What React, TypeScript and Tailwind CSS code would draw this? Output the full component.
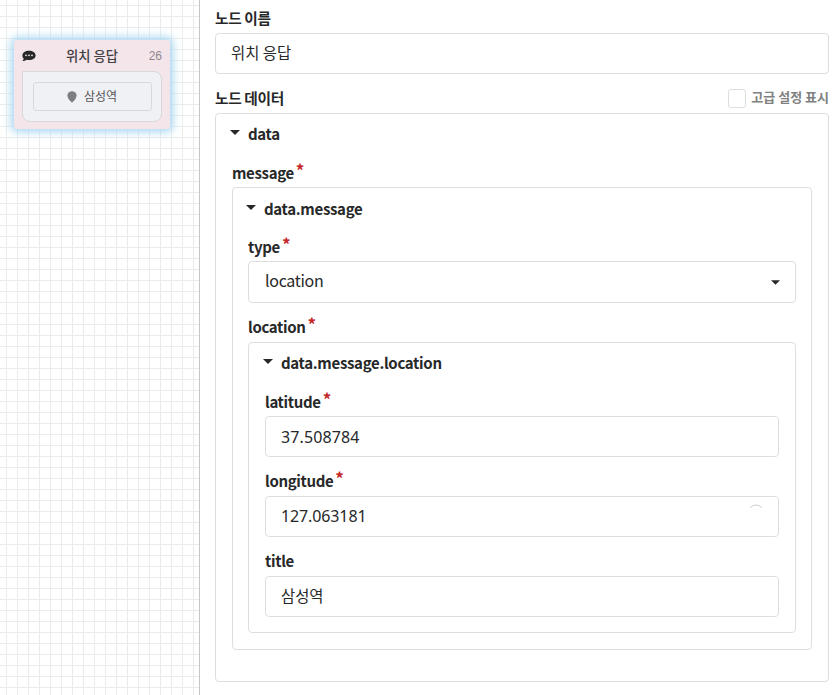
import type { ReactNode } from "react";

const korean = "font-['Noto_Sans_CJK_KR',sans-serif]";
const box = "rounded-[4px] border border-[#dededf] bg-white";

function Caret({ className = "" }: { className?: string }) {
  return (
    <svg viewBox="0 0 10 5" className={`h-[5px] w-[10px] shrink-0 fill-[#272829] ${className}`}>
      <path d="M0 0h10L5 5z" />
    </svg>
  );
}

function Label({ children, required = false, className = "" }: { children: ReactNode; required?: boolean; className?: string }) {
  return (
    <div className={`flex items-start text-[15px] leading-[20px] font-bold ${className}`}>
      <span className="tracking-[-0.35px]">{children}</span>
      {required && <span className="ml-[2px] -mt-[3px] text-[17px] font-bold text-[#c5282a]">*</span>}
    </div>
  );
}

function Heading({ children }: { children: ReactNode }) {
  return (
    <div className="flex h-[20px] items-start text-[15px] leading-[20px] font-bold">
      <Caret className="mt-[6px] mr-[8px]" />
      <span className="tracking-[-0.32px]">{children}</span>
    </div>
  );
}

function Field({ children, className = "" }: { children: ReactNode; className?: string }) {
  return <div className={`flex h-[41px] items-center px-[15px] text-[16px] ${box} ${className}`}>{children}</div>;
}

function FlowNode() {
  return (
    <div className="mt-[40px] ml-[14px] h-[89px] w-[156px] rounded-[3px] bg-[#f4e5ea] px-[8px] shadow-[0_0_8px_3px_#a9d8f2]">
      <div className="flex h-[31px] items-center">
        <svg viewBox="0 0 14 12" className="mt-px h-[12px] w-[14px]">
          <path fill="#272829" d="M7 .7c3.8 0 6.6 2 6.6 4.7S10.8 10 7 10c-.8 0-1.600-.1-2.300-.3C3.500 10.600 2 11 .5 10.900c.6-.7 1.100-1.500 1.200-2.300C.9 7.700.4 6.600.4 5.400.4 2.700 3.200.7 7 .7z" />
          <g fill="#f4e5ea">
            <circle cx="4" cy="5.300" r=".9" />
            <circle cx="7" cy="5.300" r=".9" />
            <circle cx="10" cy="5.300" r=".9" />
          </g>
        </svg>
        <span className="ml-[30px] text-[13.300px] leading-[20px] font-medium whitespace-nowrap text-[#414043]">위치 응답</span>
        <span className="ml-auto font-['Liberation_Sans',sans-serif] text-[12px] text-[#8d878a]">26</span>
      </div>
      <div className="flex h-[51px] w-[140px] items-center justify-center rounded-[8px] rounded-tl-none border border-[#d7d7dc] bg-[#f0f1f5]">
        <div className="flex h-[29px] w-[119px] items-center justify-center rounded-[3px] border border-[#d8d9dc] pb-px">
          <svg viewBox="0 0 10 12" className="mt-px mr-[7px] h-[12px] w-[10px] fill-[#7c7e80]">
            <path d="M5 .3c2.700 0 4.600 1.900 4.600 4.300C9.600 7.200 7.500 9.300 5 11.800 2.500 9.300.4 7.200.4 4.600.4 2.200 2.300.3 5 .3z" />
          </svg>
          <span className="text-[12px] leading-[18px] text-[#555658]">삼성역</span>
        </div>
      </div>
    </div>
  );
}

export default function App() {
  return (
    <div className={`flex h-[695px] w-[840px] overflow-hidden bg-white text-[#272829] ${korean}`}>
      <aside className="flow-root w-[200px] shrink-0 border-r border-[#c5c5c5] bg-[linear-gradient(to_right,#ebebeb_1px,transparent_1px),linear-gradient(to_bottom,#ebebeb_1px,transparent_1px)] bg-size-[11px_11px] bg-position-[6px_5px]">
        <FlowNode />
      </aside>
      <main className="flex w-[629px] flex-col pl-[15px]">
        <Label className="mt-[8px] h-[25px] text-[14.700px]!">노드 이름</Label>
        <Field>
          <span className="pb-px text-[15.400px]">위치 응답</span>
        </Field>
        <div className="flex h-[39px] justify-between">
          <Label className="mt-[14px] text-[14.700px]!">노드 데이터</Label>
          <div className="mt-[15px] flex h-[19px]">
            <span className="h-[19px] w-[18px] rounded-[3px] border border-[#dededf]" />
            <span className="-mt-[2px] ml-[5px] text-[13px] leading-[20px] font-bold whitespace-nowrap text-[#808080]">고급 설정 표시</span>
          </div>
        </div>
        <section className={`h-[569px] px-[16px] pt-[10px] ${box}`}>
          <div className="-ml-[2px]">
            <Heading>data</Heading>
          </div>
          <Label required className="mt-[19px] h-[24px]">message</Label>
          <div className={`h-[463px] px-[15px] pt-[11px] ${box}`}>
            <div className="-ml-[2px]">
              <Heading>data.message</Heading>
            </div>
            <Label required className="mt-[18px] h-[24px]">type</Label>
            <Field className="h-[42px]! justify-between">
              <span className="pb-[5px] pl-px tracking-[-0.3px]">location</span>
              <Caret className="h-[5px]! w-[9px]!" />
            </Field>
            <Label required className="mt-[14px] h-[25px]">location</Label>
            <div className={`h-[291px] px-[16px] pt-[10px] ${box}`}>
              <div className="-ml-[2px]">
                <Heading>data.message.location</Heading>
              </div>
              <Label required className="mt-[19px] h-[24px]">latitude</Label>
              <Field>
                <span className="font-['Noto_Sans',sans-serif] tracking-[0.1px]">37.508784</span>
              </Field>
              <Label required className="mt-[14px] h-[25px]">longitude</Label>
              <Field className="justify-between">
                <span className="pb-px font-['Noto_Sans',sans-serif] tracking-[-0.12px]">127.063181</span>
                <svg viewBox="0 0 14 4" className="mb-[22px] h-[4px] w-[14px] fill-none stroke-[#cfcfcf]">
                  <path d="M1 3.500Q7-1.500 13 3.500" />
                </svg>
              </Field>
              <Label className="mt-[14px] h-[25px]">title</Label>
              <Field>
                <span className="pb-px text-[15.400px]">삼성역</span>
              </Field>
            </div>
          </div>
        </section>
      </main>
    </div>
  );
}
